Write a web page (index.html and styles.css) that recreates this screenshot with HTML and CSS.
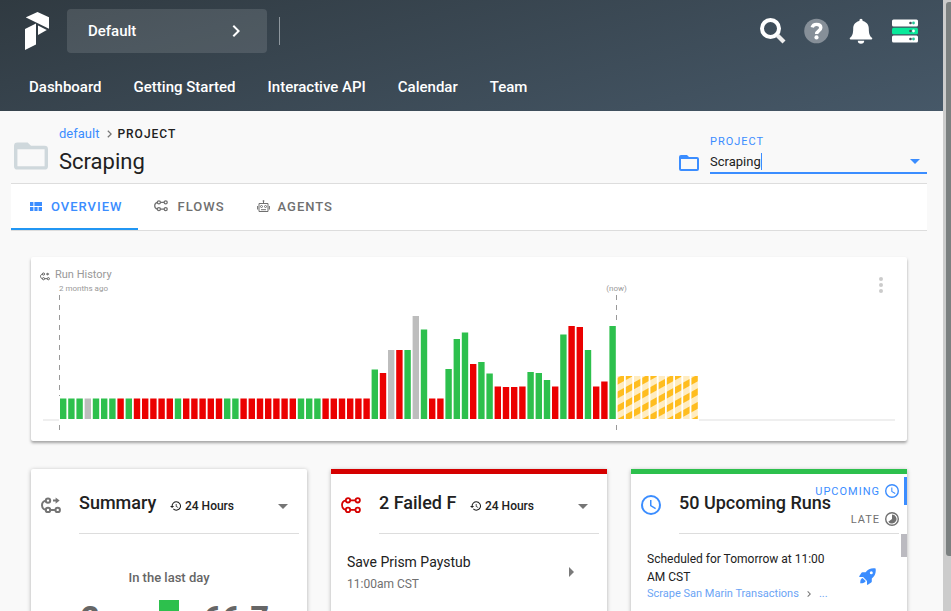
FILE: index.html
```html
<!DOCTYPE html>
<html lang="en">
<head>
<meta charset="utf-8">
<title>Scraping – Project</title>
<link rel="stylesheet" href="styles.css">
</head>
<body>
<svg class="defs" aria-hidden="true">
  <symbol id="i-flow" viewBox="0 0 20 17">
    <g fill="none" stroke="currentColor" stroke-width="1.8">
      <circle cx="7" cy="3.3" r="2.2"/><circle cx="16.7" cy="3.3" r="2.2"/>
      <circle cx="7" cy="12.9" r="2.2"/><circle cx="16.7" cy="12.9" r="2.2"/>
      <path d="M9.2 3.3h5.3M9.2 12.9h5.3M4.8 3.3C2.4 3.9 1 5.9 1 8.1s1.4 4.2 3.8 4.8"/>
    </g>
  </symbol>
  <symbol id="i-flow-run" viewBox="0 0 20 17">
    <g fill="none" stroke="currentColor" stroke-width="2">
      <circle cx="7" cy="3.6" r="2.2"/>
      <circle cx="7" cy="12.9" r="2.2"/><circle cx="16.7" cy="12.9" r="2.2"/>
      <path d="M12 3.6h4M9.2 12.9h5.3M4.8 3.6C2.4 4.2 1 6.1 1 8.2s1.4 4.1 3.8 4.7"/>
    </g>
    <path fill="currentColor" d="M14.6 .4 18.6 3.6l-4 3.2z"/>
  </symbol>
  <symbol id="i-folder" viewBox="2 4 20 16"><path fill="currentColor" d="M20 18H4V8h16m0-2h-8l-2-2H4a2 2 0 0 0-2 2v12a2 2 0 0 0 2 2h16a2 2 0 0 0 2-2V8a2 2 0 0 0-2-2z"/></symbol>
  <symbol id="i-chevron" viewBox="8 6 8 12"><path fill="currentColor" d="M8.59 16.58 13.17 12 8.59 7.41 10 6l6 6-6 6z"/></symbol>
  <symbol id="i-down" viewBox="0 0 10 5"><path fill="currentColor" d="M0 0h10L5 5z"/></symbol>
  <symbol id="i-history" viewBox="1 3 21 18"><path fill="currentColor" d="M13.5 8H12v5l4.28 2.54.72-1.21-3.5-2.08V8M13 3a9 9 0 0 0-9 9H1l3.960 4.030L9 12H6a7 7 0 1 1 2.060 4.940l-1.420 1.420A9 9 0 1 0 13 3"/></symbol>
  <symbol id="i-clock" viewBox="2 2 20 20"><path fill="currentColor" d="M12 20a8 8 0 1 0 0-16 8 8 0 0 0 0 16m0-18a10 10 0 1 1 0 20 10 10 0 0 1 0-20m.5 5v5.250l4.500 2.670-.750 1.230L11 13V7z"/></symbol>
  <symbol id="i-late" viewBox="2 2 20 20"><circle cx="12" cy="12" r="9" fill="none" stroke="currentColor" stroke-width="2"/><path fill="currentColor" d="M12 5.5a6.500 6.500 0 1 1-5.300 10.300L12 12z"/></symbol>
</svg>

<div class="app">
  <div class="page">
    <header class="top">
      <div class="bar">
        <a class="logo" href="#" aria-label="Home">
          <svg viewBox="0 0 24 38" fill="#fff"><path d="M1 5.3 12.5 0 24 5.3v11.500L1 5.600z"/><path d="M0 17 11 11.600v20.800L0 38z"/><path d="M13 13.400 21.800 18 13 23z"/></svg>
        </a>
        <button class="team" type="button"><span>Default</span><svg class="chev"><use href="#i-chevron"/></svg></button>
        <span class="rule"></span>
        <div class="tools">
          <button type="button" aria-label="Search"><svg viewBox="0 0 26 26"><circle cx="10.5" cy="10.5" r="8.5" fill="none" stroke="#fff" stroke-width="4"/><path d="m17.5 17.5 6.5 6.5" stroke="#eee" stroke-width="4.2"/></svg></button>
          <button type="button" aria-label="Help"><svg viewBox="0 0 26 26"><circle cx="12.5" cy="13" r="12.3" fill="#868f98"/><path d="M8.200 9.400C8.800 7.200 10.500 6.400 12.500 6.400c2.500 0 4.300 1.300 4.300 3.400 0 3.200-4.200 2.900-4.200 6.200" fill="none" stroke="#fff" stroke-width="3.400"/><circle cx="12.500" cy="19.400" r="2.100" fill="#fff"/></svg></button>
          <button type="button" aria-label="Notifications"><svg viewBox="0 0 26 26" fill="#fff"><path d="M11.400 2.300a1.600 1.600 0 0 1 3.200 0v.6c3.700.7 6.200 3.500 6.200 7.500 0 5.500 1 7.500 3.200 9.400.6.600.2 1.600-.6 1.600H2.600c-.8 0-1.200-1-.6-1.600 2.200-1.900 3.200-3.900 3.200-9.400 0-4 2.500-6.800 6.200-7.500z"/><path d="M9.800 22.800h6.400a3.200 3 0 0 1-6.400 0z"/></svg></button>
          <button type="button" aria-label="System status"><svg viewBox="0 0 26 26"><g fill="#fff"><rect y="1.500" width="26" height="7" rx="1.500"/><rect y="17.500" width="26" height="7" rx="1.500"/></g><rect y="9.800" width="26" height="6.400" rx="1.500" fill="#09e99a"/><g fill="#3d4b57"><circle cx="18.500" cy="5" r="1.300"/><circle cx="18.500" cy="13" r="1.300"/><circle cx="18.500" cy="21" r="1.300"/></g><g fill="#27c596"><circle cx="21.500" cy="5" r="1.400"/><circle cx="21.500" cy="21" r="1.400"/></g><circle cx="21.500" cy="13" r="1.400" fill="#fff"/></svg></button>
        </div>
      </div>
      <nav class="nav">
        <a href="#">Dashboard</a><a href="#">Getting Started</a><a href="#">Interactive API</a><a href="#">Calendar</a><a href="#">Team</a>
      </nav>
    </header>

    <section class="head">
      <svg class="head-icon"><use href="#i-folder"/></svg>
      <div class="head-text">
        <div class="crumbs"><a href="#">default</a><svg><use href="#i-chevron"/></svg><span>PROJECT</span></div>
        <h1>Scraping</h1>
      </div>
      <div class="picker">
        <svg class="picker-icon"><use href="#i-folder"/></svg>
        <div class="field">
          <label for="project">PROJECT</label>
          <div class="control"><input id="project" type="text" value="Scraping"><i class="caret"></i><svg class="down"><use href="#i-down"/></svg></div>
        </div>
      </div>
    </section>

    <nav class="tabs">
      <a class="on" href="#"><svg class="t-view" viewBox="0 0 12 9" fill="currentColor"><path d="M0 0h3.400v4H0zM0 5h3.400v4H0zM4.400 0H12v4H4.400zM4.400 5h3.200v4H4.400zM8.600 5H12v4H8.600z"/></svg>OVERVIEW</a>
      <a href="#"><svg class="t-flow"><use href="#i-flow"/></svg>FLOWS</a>
      <a href="#"><svg class="t-agent" viewBox="0 0 13 12" fill="none" stroke="currentColor"><path d="M6.500 3V1M2 3.500h9v8H2zM.6 6v3.500M12.400 6v3.500M4 9.700h5"/><circle cx="4.500" cy="6.500" r="1"/><circle cx="8.500" cy="6.500" r="1"/><circle cx="6.500" cy="1" r=".6"/></svg>AGENTS</a>
    </nav>

    <main class="content">
      <section class="card history">
        <div class="history-head">
          <svg class="h-icon"><use href="#i-flow-run"/></svg>
          <h2>Run History</h2>
          <button type="button" aria-label="More"><svg viewBox="0 0 4 16" fill="#cbcbcb"><circle cx="2" cy="2" r="2"/><circle cx="2" cy="8" r="2"/><circle cx="2" cy="14" r="2"/></svg></button>
        </div>
        <svg class="chart" id="chart" viewBox="0 0 876 160" role="img" aria-label="Run history">
          <defs><pattern id="pending" width="12" height="12" patternUnits="userSpaceOnUse" patternTransform="rotate(-29 589 100)"><rect width="12" height="12" fill="#ffecc0"/><rect width="12" height="6" fill="#ffbd1f"/></pattern></defs>
          <path d="M12 139h16M668 139h196" stroke="#efefef" stroke-width="2"/>
          <path d="M28.500 14v101M28.500 144v5M585.500 14v26M585.500 144v5" stroke="#999" stroke-dasharray="5 5"/>
          <text x="28" y="10">2 months ago</text>
          <text x="585.500" y="10" text-anchor="middle">(now)</text>
        </svg>
      </section>

      <section class="card">
        <div class="card-head">
          <svg class="c-flow grey"><use href="#i-flow-run"/></svg>
          <div class="card-title">
            <h2>Summary</h2>
            <label class="range"><svg class="hist"><use href="#i-history"/></svg><select aria-label="Summary period"><option>24 Hours</option></select><svg class="down"><use href="#i-down"/></svg></label>
          </div>
        </div>
        <p class="lead">In the last day</p>
        <div class="stats"><b>2</b><i></i><b>66.7</b></div>
      </section>

      <section class="card failed">
        <div class="card-head">
          <svg class="c-flow"><use href="#i-flow"/></svg>
          <div class="card-title">
            <h2>2 Failed Flows</h2>
            <label class="range"><svg class="hist"><use href="#i-history"/></svg><select aria-label="Failed period"><option>24 Hours</option></select><svg class="down"><use href="#i-down"/></svg></label>
          </div>
        </div>
        <a class="row" href="#"><span><strong>Save Prism Paystub</strong><small>11:00am CST</small></span><svg viewBox="0 0 5 10" fill="#7a7a7a"><path d="M0 0v10l5-5z"/></svg></a>
      </section>

      <section class="card upcoming">
        <div class="card-head">
          <svg class="c-clock"><use href="#i-clock"/></svg>
          <div class="card-title"><h2>50 Upcoming Runs</h2></div>
          <div class="modes">
            <button class="on" type="button">UPCOMING<svg><use href="#i-clock"/></svg></button>
            <button type="button">LATE<svg><use href="#i-late"/></svg></button>
          </div>
        </div>
        <div class="run">
          <div class="run-text">
            <p>Scheduled for Tomorrow at 11:00 AM CST</p>
            <div class="run-path"><a href="#">Scrape San Marin Transactions</a><svg><use href="#i-chevron"/></svg><a href="#">...</a></div>
          </div>
          <svg class="rocket" viewBox="0 0 17 17" fill="currentColor"><path fill-rule="evenodd" d="M16.600.4C12.500-.2 9 .9 6.600 4.200H3.500c-.5 0-.8.200-1 .6L.2 8.200c-.2.400 0 .8.500.8h3.400l3.900 3.900v3.400c0 .5.400.7.8.5l3.400-2.300c.4-.2.600-.5.600-1v-3.100C16.100 8 17.200 4.500 16.600.4zM12.300 6.200a1.500 1.500 0 1 1 0-3 1.500 1.500 0 0 1 0 3z"/><path d="M3.500 10c-1.800.7-2.200 2-2.300 5.300 3.300-.1 4.900-.6 5.500-2.300z"/></svg>
        </div>
        <span class="inner-thumb"></span>
      </section>
    </main>
  </div>
  <div class="scroll" aria-hidden="true"><span></span></div>
</div>
<script src="chart.js"></script>
</body>
</html>
```
FILE: styles.css
```css
* { box-sizing: border-box; }
body { margin: 0; font-family: Roboto, sans-serif; color: #212121; background: #f9f9f9; overflow: hidden; }
h1, h2, p { margin: 0; font-weight: 400; }
a { color: inherit; text-decoration: none; }
button { font: inherit; color: inherit; border: 0; padding: 0; background: none; cursor: pointer; }
svg { display: block; flex: none; }
.defs { position: absolute; width: 0; height: 0; }

.app { display: flex; height: 100vh; }
.page { flex: 1; min-width: 0; overflow: hidden; }
.scroll { width: 8px; background: #ccc; padding: 2px 0 0 3px; }
.scroll span { display: block; height: 91%; background: #7b8080; border-radius: 3px 0 0 3px; }

.top { background: linear-gradient(165deg, #303a41, #465868); color: #fff; padding: 9px 25px 0; font-size: 15px; font-weight: 500; }
.bar { display: flex; align-items: center; }
.logo svg { width: 24px; height: 38px; }
.team { display: flex; align-items: center; justify-content: space-between; width: 200px; height: 44px; margin-left: 18px; padding: 0 27px 0 21px; border-radius: 4px; background: rgba(255, 255, 255, .12); }
.chev { width: 8px; height: 12px; }
.rule { width: 1px; height: 28px; margin-left: 12px; background: #8e979e; }
.tools { display: flex; gap: 18px; margin-left: auto; }
.tools svg { width: 26px; height: 26px; }
.nav { display: flex; gap: 32px; padding: 24px 4px 14px; line-height: 20px; }

.head { display: flex; align-items: center; padding: 13px 16px 5px 14px; }
.head-icon { width: 34px; height: 28px; margin-top: 10px; color: #cfd8dc; }
.head-text { margin-left: 11px; }
.crumbs { display: flex; align-items: center; font-size: 13px; line-height: 20px; }
.crumbs a { color: #3b8dff; }
.crumbs svg { width: 5px; height: 8px; margin: 0 5px 0 8px; color: #777; }
.crumbs span { font-size: 12px; font-weight: 500; letter-spacing: 1px; }
h1 { font-size: 22px; line-height: 32px; margin-top: 2px; }
.picker { display: flex; align-items: flex-end; align-self: flex-end; margin: 0 0 4px auto; }
.picker-icon { width: 20px; height: 16px; margin: 0 11px 3px 0; color: #3b8dff; }
.field { width: 217px; }
.field label { display: block; font-size: 11px; line-height: 16px; letter-spacing: 1px; color: #3b8dff; }
.control { display: flex; align-items: center; height: 24px; border-bottom: 2px solid #3b8dff; padding-right: 7px; }
.control input { field-sizing: content; border: 0; padding: 0; background: none; outline: none; font: 13px Roboto, sans-serif; color: #212121; }
.caret { width: 1px; height: 17px; background: #3b8dff; }
.down { width: 10px; height: 5px; margin-left: auto; }
.control .down { color: #3b8dff; }

.tabs { display: flex; margin: 0 16px 0 11px; background: #fff; border: solid #ddd; border-width: 1px 0; height: 48px; font-size: 13px; font-weight: 500; letter-spacing: 1px; color: #707070; }
.tabs a { display: flex; align-items: center; padding: 0 16px; border-bottom: 2px solid transparent; }
.tabs a.on { color: #3b8dff; border-color: #2196f3; }
.t-view { width: 12px; height: 9px; margin: 0 9px 0 3px; }
.t-flow { width: 14px; height: 12px; margin-right: 9px; }
.t-agent { width: 13px; height: 12px; margin-right: 8px; }

.content { display: grid; grid-template-columns: repeat(3, minmax(0, 1fr)); column-gap: 24px; row-gap: 28px; padding: 26px 36px 0 31px; }
.card { position: relative; height: 240px; background: #fff; border-radius: 2px; box-shadow: 0 1px 4px rgba(0, 0, 0, .3); }
.history { grid-column: 1 / -1; height: auto; box-shadow: 0 2px 3px rgba(0, 0, 0, .35); }
.history-head { display: flex; height: 24px; align-items: flex-end; padding: 0 24px 0 9px; }
.h-icon { width: 10px; height: 9px; margin: 0 5px 0 0; color: #606060; }
.history h2 { font-size: 11px; line-height: 12px; color: #999; }
.history-head button { margin: 0 0 -12px auto; }
.history-head button svg { width: 4px; height: 16px; }
.chart { width: 100%; height: auto; }
.chart text { font-size: 8px; fill: #999; }

.card-head { display: flex; position: relative; height: 65px; padding: 0 8px 0 10px; }
.failed, .upcoming { border-top: 5px solid #d50000; border-radius: 0; }
.upcoming { border-color: #2dc04d; }
.failed .card-head, .upcoming .card-head { margin-top: -5px; }
.c-flow { width: 20px; height: 17px; margin: 28px 18px 0 0; color: #d50000; }
.c-flow.grey { color: #757575; }
.c-clock { width: 20px; height: 20px; margin: 26px 18px 0 0; color: #3b8dff; }
.card-title { display: flex; flex: 1; min-width: 0; align-items: center; border-bottom: 1px solid #ddd; padding-top: 4px; }
.card h2 { white-space: nowrap; overflow: hidden; }
.card-title h2 { flex: 0 0 78px; font-size: 18px; font-weight: 500; line-height: 24px; }
.upcoming .card-title h2 { flex: 1; }
.range { display: flex; flex: 1; align-items: center; padding: 6px 11px 0 13px; }
.hist { width: 11px; height: 10px; margin-right: 4px; }
.range select { appearance: none; border: 0; padding: 0; background: none; font: 500 12px Roboto, sans-serif; color: #212121; }
.range .down { color: #757575; }
.lead { margin-top: 34px; text-align: center; font-size: 13px; font-weight: 500; line-height: 20px; color: #666; }
.stats { display: grid; grid-template-columns: 1fr auto 1fr; padding: 12px 38px 0; font-size: 32px; font-weight: 700; line-height: 34px; color: #666; }
.stats b:first-child { padding-left: 12px; }
.stats b:last-child { text-align: right; }
.stats i { width: 20px; height: 20px; background: #2dc04d; }

.row { display: flex; align-items: center; justify-content: space-between; padding: 16px 33px 0 16px; }
.row svg { width: 5px; height: 10px; }
.row strong { display: block; font-size: 14px; font-weight: 400; line-height: 24px; }
.row small { display: block; font-size: 12px; line-height: 20px; color: #707070; }

.modes { position: absolute; top: 8px; right: 0; font-size: 11px; color: #707070; }
.modes button { display: flex; align-items: center; justify-content: flex-end; width: 100%; height: 28px; padding-right: 5px; border-right: 3px solid transparent; letter-spacing: 1px; }
.modes .on { color: #3b8dff; border-color: #3b8dff; }
.modes svg { width: 14px; height: 14px; margin-left: 5px; }
.run { display: flex; align-items: center; justify-content: space-between; padding: 16px 31px 0 16px; font-size: 12px; }
.run-text { width: 190px; }
.run p { line-height: 18px; }
.run-path { display: flex; align-items: center; line-height: 16px; font-size: 11px; white-space: nowrap; color: #6ba4f5; }
.run-path svg { width: 4px; height: 6px; margin: 0 8px; color: #777; }
.rocket { width: 17px; height: 17px; color: #3b8dff; }
.inner-thumb { position: absolute; right: 0; top: 60px; width: 6px; height: 23px; background: #bbbac0; }
```
FILE: chart.js
```js
// Each run: state letter and bar height (g success, r failed, x cancelled)
const low = 'gggxgggrgrrrrrgrrrrrggrrrrrrrgggrrrrrr'.split('').map(s => [s, 20.5]);
const recent = [
  ['g', 49.5], ['r', 46], ['x', 69], ['r', 69], ['g', 69], ['x', 103], ['g', 89.5], ['r', 20.5], ['r', 20.5],
  ['g', 50], ['g', 80], ['g', 86.5], ['r', 55], ['g', 57], ['g', 45.5], ['r', 32.5], ['r', 32], ['r', 32], ['r', 32.5],
  ['g', 47], ['g', 46], ['g', 39], ['r', 32.5], ['g', 84.5], ['r', 93], ['r', 92], ['g', 69], ['r', 32.5], ['r', 37.5], ['g', 93]
];
const pending = Array(10).fill(['p', 43]);
const fill = { g: '#2dc04d', r: '#eb0000', x: '#bdbdbd', p: 'url(#pending)' };
const chart = document.getElementById('chart');
[...low, ...recent, ...pending].forEach(([state, h], i) => {
  const bar = document.createElementNS('http://www.w3.org/2000/svg', 'rect');
  bar.setAttribute('x', 29 + 8.2 * i);
  bar.setAttribute('y', 138 - h);
  bar.setAttribute('width', 6.4);
  bar.setAttribute('height', h);
  bar.setAttribute('fill', fill[state]);
  chart.append(bar);
});
```
